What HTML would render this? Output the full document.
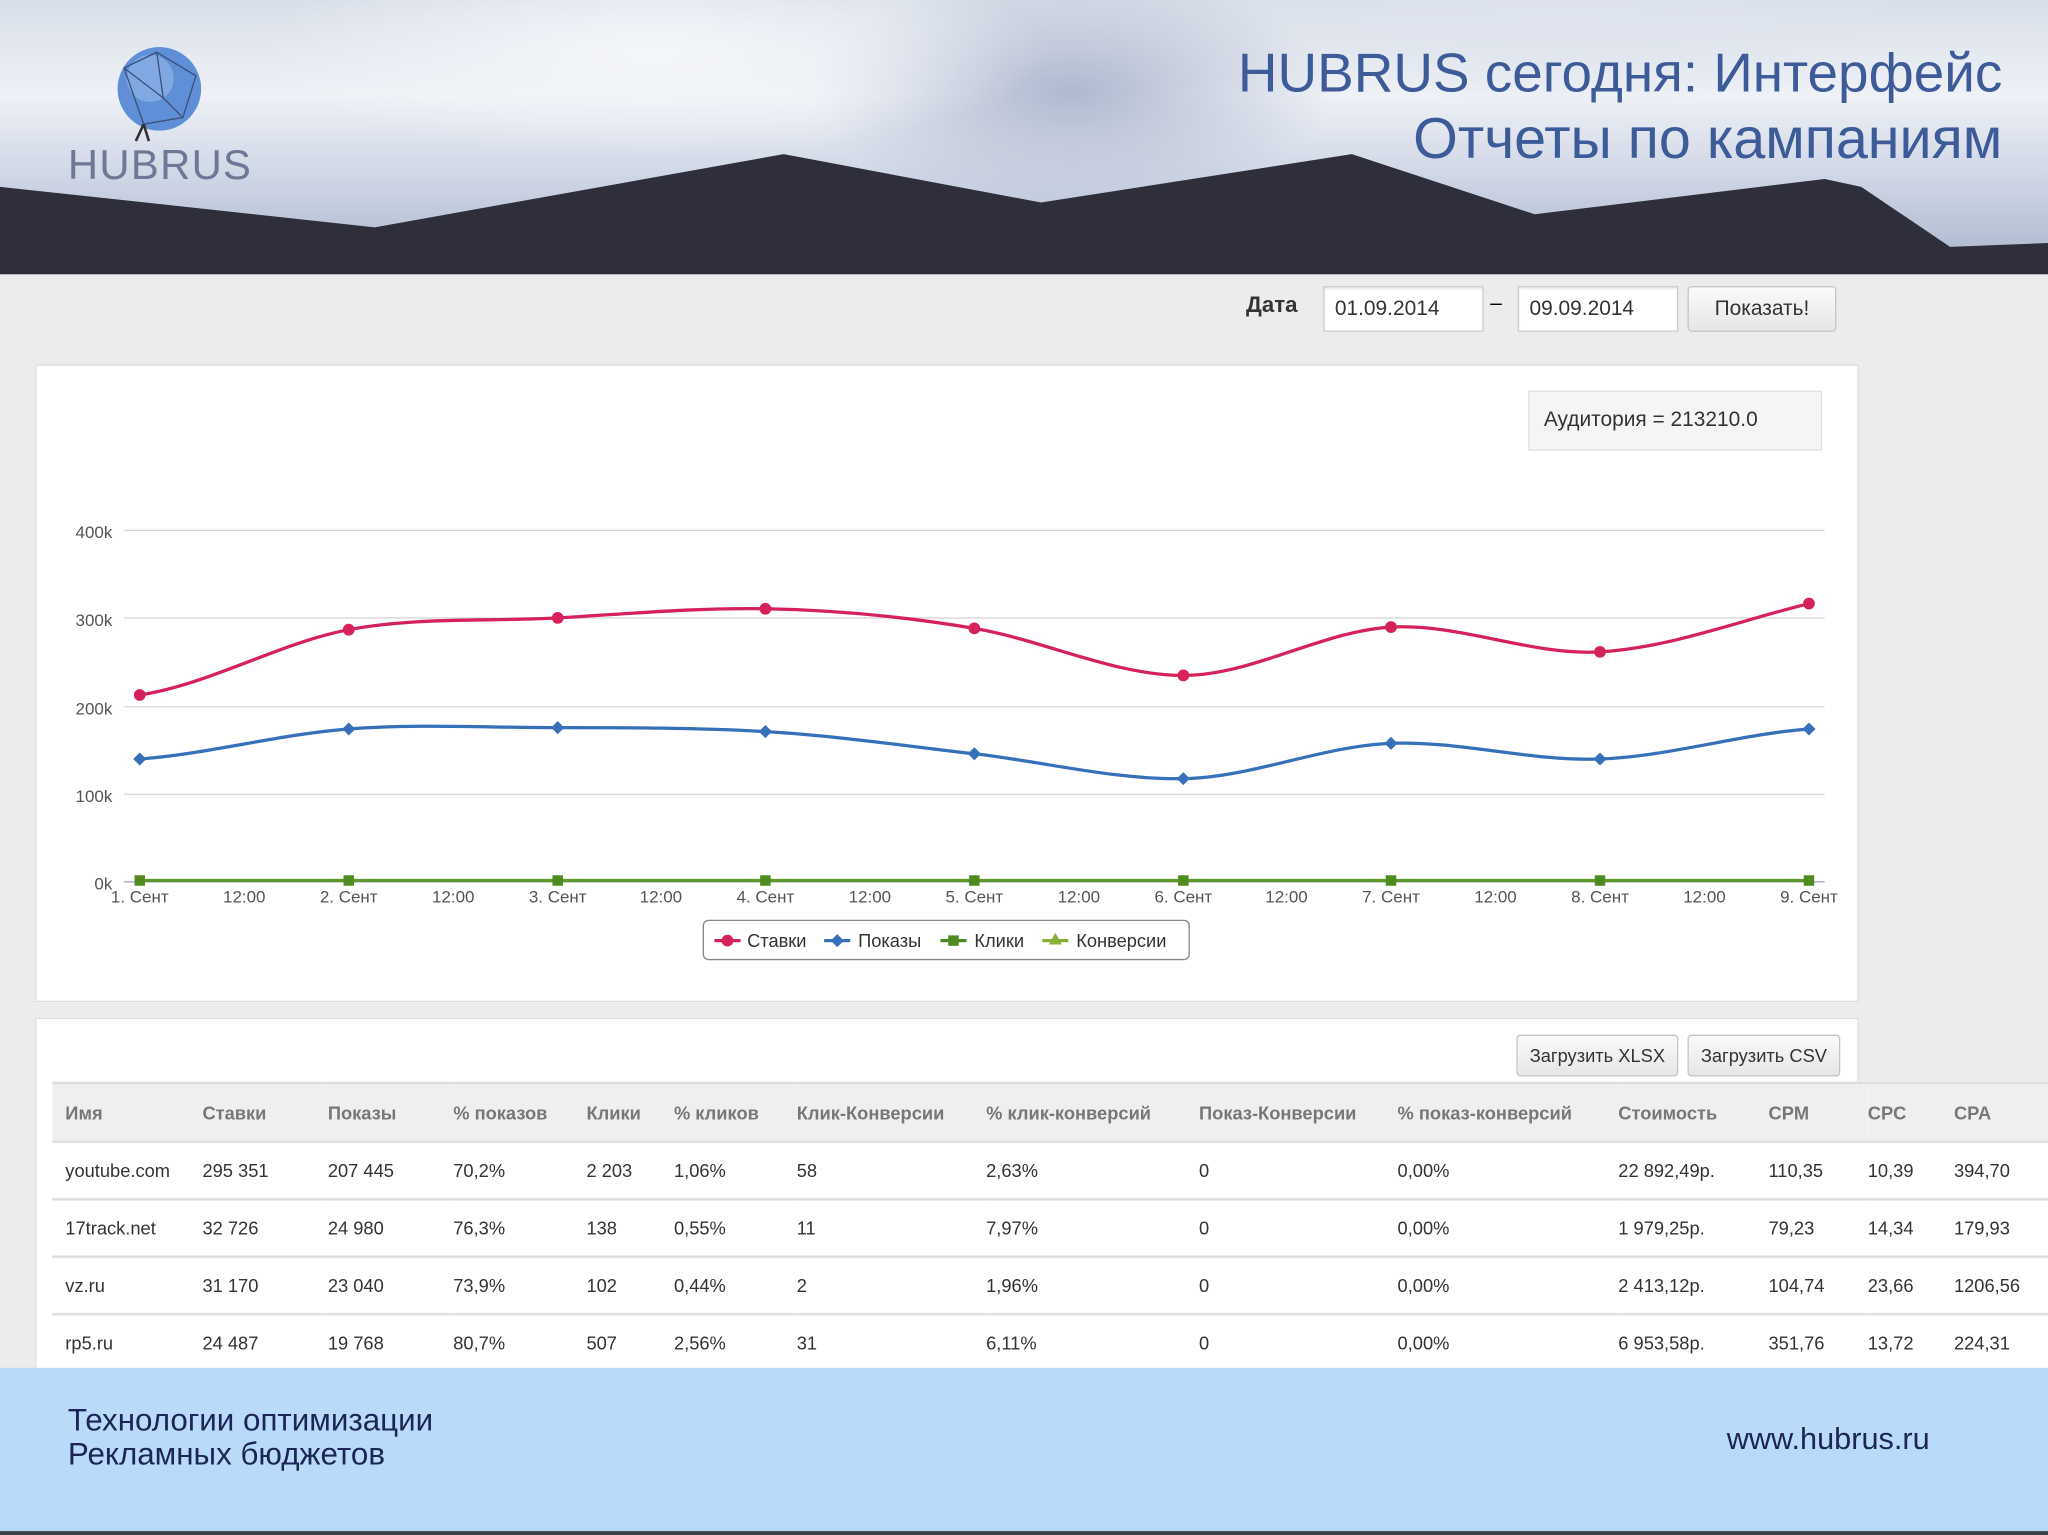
<!DOCTYPE html>
<html><head><meta charset="utf-8"><style>
html,body{margin:0;padding:0;width:2048px;height:1535px;overflow:hidden;background:#ececec}
#w{position:absolute;left:0;top:0;width:1568px;height:1175px;transform:scale(1.30612,1.3064);transform-origin:0 0;font-family:"Liberation Sans",sans-serif;background:#ececec;overflow:hidden}
.abs{position:absolute}
.hdr{left:0;top:0;width:1568px;height:209px;background:radial-gradient(ellipse 300px 80px at 500px 40px,#f4f6fa,transparent),radial-gradient(ellipse 200px 90px at 820px 70px,#aeb8cf,transparent),radial-gradient(ellipse 260px 60px at 1200px 20px,#dfe4ee,transparent),linear-gradient(180deg,#d9dfe9 0%,#eef1f6 35%,#c9d1e2 70%,#aab5cc 100%)}
.title{right:35px;color:#3c5b98;text-align:right;white-space:nowrap}
.inp{background:#fff;border:1px solid #ccc;box-shadow:inset 0 1px 2px rgba(0,0,0,.1);font-size:16px;color:#333;line-height:34px;padding-left:8px;box-sizing:border-box;height:35px}
.btn{background:linear-gradient(#fafafa,#e6e6e6);border:1px solid #c4c4c4;border-radius:3px;font-size:15px;color:#333;text-align:center;box-sizing:border-box}
.panel{background:#fff;border:1px solid #ddd}
table{border-collapse:collapse;font-size:14px;color:#333;table-layout:fixed}
td{padding:0;height:42px;border-bottom:2px solid #e0e0e0;white-space:nowrap;overflow:hidden}
tr.h td{background:#efefef;color:#777;font-weight:bold;height:43px}
</style></head><body><div id="w">
<div class="abs hdr"></div>
<svg class="abs" style="left:0;top:0" width="1568" height="210"><polygon points="0,143 287,174 600,118 797,155 1035,118 1175,164 1397,137 1425,143 1493,189 1568,186 1568,210 0,210" fill="#2e2f3a"/>
<circle cx="122" cy="68" r="32" fill="#5f8fd6"/><circle cx="115" cy="60" r="18" fill="#8fb4ea" opacity=".7"/>
<path d="M95,52 L120,40 L150,58 L140,90 L110,95 Z M120,40 L125,75 L140,90 M125,75 L95,52" stroke="#3a4f7a" stroke-width="1" fill="none"/>
<path d="M110,95 L104,108 M110,95 L114,108" stroke="#333" stroke-width="2"/></svg>
<div class="abs" style="left:52px;top:108px;font-size:32px;color:#6b7896;letter-spacing:1px">HUBRUS</div>
<div class="abs title" style="top:32px;font-size:42px">HUBRUS сегодня: Интерфейс</div>
<div class="abs title" style="top:82px;font-size:44px">Отчеты по кампаниям</div>

<div class="abs" style="left:954px;top:224px;font-size:17px;font-weight:bold;color:#333">Дата</div>
<div class="abs inp" style="left:1013px;top:219px;width:123px">01.09.2014</div>
<div class="abs" style="left:1141px;top:224px;font-size:16px">–</div>
<div class="abs inp" style="left:1162px;top:219px;width:123px">09.09.2014</div>
<div class="abs btn" style="left:1292px;top:219px;width:114px;height:35px;line-height:33px;font-size:16px">Показать!</div>

<div class="abs panel" style="left:27px;top:279px;width:1394px;height:486px"></div>
<div class="abs" style="left:1170px;top:299px;width:225px;height:46px;background:#f5f5f5;border:1px solid #e0e0e0;box-sizing:border-box;font-size:16px;color:#333;line-height:44px;padding-left:11px">Аудитория = 213210.0</div>
<svg class="abs" style="left:0;top:0" width="1568" height="780" font-family="Liberation Sans,sans-serif" font-size="13" fill="#555">
<g stroke="#d8d8d8" stroke-width="1"><line x1="95" y1="406" x2="1397" y2="406"/><line x1="95" y1="473" x2="1397" y2="473"/><line x1="95" y1="541" x2="1397" y2="541"/><line x1="95" y1="608" x2="1397" y2="608"/><line x1="95" y1="675" x2="1397" y2="675" stroke="#aac"/></g>
<g text-anchor="end"><text x="86" y="412">400k</text><text x="86" y="479">300k</text><text x="86" y="547">200k</text><text x="86" y="614">100k</text><text x="86" y="681">0k</text></g>
<g text-anchor="middle"><text x="107" y="691">1. Сент</text><text x="187" y="691">12:00</text><text x="267" y="691">2. Сент</text><text x="347" y="691">12:00</text><text x="427" y="691">3. Сент</text><text x="506" y="691">12:00</text><text x="586" y="691">4. Сент</text><text x="666" y="691">12:00</text><text x="746" y="691">5. Сент</text><text x="826" y="691">12:00</text><text x="906" y="691">6. Сент</text><text x="985" y="691">12:00</text><text x="1065" y="691">7. Сент</text><text x="1145" y="691">12:00</text><text x="1225" y="691">8. Сент</text><text x="1305" y="691">12:00</text><text x="1385" y="691">9. Сент</text></g>
<line x1="107" y1="674" x2="1385" y2="674" stroke="#5a9a2a" stroke-width="2.5"/>
<g fill="#4f8a1e"><rect x="103" y="670" width="8" height="8"/><rect x="263" y="670" width="8" height="8"/><rect x="423" y="670" width="8" height="8"/><rect x="582" y="670" width="8" height="8"/><rect x="742" y="670" width="8" height="8"/><rect x="902" y="670" width="8" height="8"/><rect x="1061" y="670" width="8" height="8"/><rect x="1221" y="670" width="8" height="8"/><rect x="1381" y="670" width="8" height="8"/></g>
<path d="M107,532 C160,524 214,492 267,482 C320,472 374,476 427,473 C480,470 533,465 586,466 C639,467 693,472 746,481 C799,490 853,517 906,517 C959,517 1012,483 1065,480 C1118,477 1172,502 1225,499 C1278,496 1332,475 1385,462" fill="none" stroke="#d6225a" stroke-width="2.5"/>
<g fill="#d6225a"><circle cx="107" cy="532" r="4.5"/><circle cx="267" cy="482" r="4.5"/><circle cx="427" cy="473" r="4.5"/><circle cx="586" cy="466" r="4.5"/><circle cx="746" cy="481" r="4.5"/><circle cx="906" cy="517" r="4.5"/><circle cx="1065" cy="480" r="4.5"/><circle cx="1225" cy="499" r="4.5"/><circle cx="1385" cy="462" r="4.5"/></g>
<path d="M107,581 C160,577 214,562 267,558 C320,554 374,557 427,557 C480,557 533,557 586,560 C639,563 693,571 746,577 C799,583 853,597 906,596 C959,595 1012,571 1065,569 C1118,567 1172,583 1225,581 C1278,579 1332,562 1385,558" fill="none" stroke="#3570b8" stroke-width="2.5"/>
<g fill="#3570b8"><path d="M107,576l5,5-5,5-5-5z"/><path d="M267,553l5,5-5,5-5-5z"/><path d="M427,552l5,5-5,5-5-5z"/><path d="M586,555l5,5-5,5-5-5z"/><path d="M746,572l5,5-5,5-5-5z"/><path d="M906,591l5,5-5,5-5-5z"/><path d="M1065,564l5,5-5,5-5-5z"/><path d="M1225,576l5,5-5,5-5-5z"/><path d="M1385,553l5,5-5,5-5-5z"/></g>
<rect x="538.5" y="704.5" width="372" height="30" rx="4" fill="#fff" stroke="#888"/>
<g font-size="14" fill="#333"><line x1="547" y1="720" x2="567" y2="720" stroke="#d6225a" stroke-width="2.5"/><circle cx="557" cy="720" r="4.5" fill="#d6225a"/><text x="572" y="725">Ставки</text>
<line x1="631" y1="720" x2="651" y2="720" stroke="#3570b8" stroke-width="2.5"/><path d="M641,715l5,5-5,5-5-5z" fill="#3570b8"/><text x="657" y="725">Показы</text>
<line x1="720" y1="720" x2="740" y2="720" stroke="#4f8a1e" stroke-width="2.5"/><rect x="726" y="716" width="8" height="8" fill="#4f8a1e"/><text x="746" y="725">Клики</text>
<line x1="798" y1="720" x2="818" y2="720" stroke="#8aae3a" stroke-width="2.5"/><path d="M808,714l5,9h-10z" fill="#8aae3a"/><text x="824" y="725">Конверсии</text></g>
</svg>

<div class="abs panel" style="left:27px;top:779px;width:1394px;height:300px"></div>
<div class="abs btn" style="left:1161px;top:792px;width:124px;height:32px;line-height:31px;font-size:14px">Загрузить XLSX</div>
<div class="abs btn" style="left:1292px;top:792px;width:117px;height:32px;line-height:31px;font-size:14px">Загрузить CSV</div>
<table class="abs" style="left:40px;top:828px;width:1528px;background:#fff;border-top:2px solid #ddd">
<colgroup><col style="width:115px"><col style="width:96px"><col style="width:96px"><col style="width:102px"><col style="width:67px"><col style="width:94px"><col style="width:145px"><col style="width:163px"><col style="width:152px"><col style="width:169px"><col style="width:115px"><col style="width:76px"><col style="width:66px"><col style="width:72px"></colgroup>
<tr class="h"><td style="padding-left:10px">Имя</td><td>Ставки</td><td>Показы</td><td>% показов</td><td>Клики</td><td>% кликов</td><td>Клик-Конверсии</td><td>% клик-конверсий</td><td>Показ-Конверсии</td><td>% показ-конверсий</td><td>Стоимость</td><td>CPM</td><td>CPC</td><td>CPA</td></tr>
<tr><td style="padding-left:10px">youtube.com</td><td>295 351</td><td>207 445</td><td>70,2%</td><td>2 203</td><td>1,06%</td><td>58</td><td>2,63%</td><td>0</td><td>0,00%</td><td>22 892,49р.</td><td>110,35</td><td>10,39</td><td>394,70</td></tr>
<tr><td style="padding-left:10px">17track.net</td><td>32 726</td><td>24 980</td><td>76,3%</td><td>138</td><td>0,55%</td><td>11</td><td>7,97%</td><td>0</td><td>0,00%</td><td>1 979,25р.</td><td>79,23</td><td>14,34</td><td>179,93</td></tr>
<tr><td style="padding-left:10px">vz.ru</td><td>31 170</td><td>23 040</td><td>73,9%</td><td>102</td><td>0,44%</td><td>2</td><td>1,96%</td><td>0</td><td>0,00%</td><td>2 413,12р.</td><td>104,74</td><td>23,66</td><td>1206,56</td></tr>
<tr><td style="padding-left:10px">rp5.ru</td><td>24 487</td><td>19 768</td><td>80,7%</td><td>507</td><td>2,56%</td><td>31</td><td>6,11%</td><td>0</td><td>0,00%</td><td>6 953,58р.</td><td>351,76</td><td>13,72</td><td>224,31</td></tr>
</table>

<div class="abs" style="left:0;top:1047px;width:1568px;height:125px;background:#b9dbf9"></div>
<div class="abs" style="left:52px;top:1075px;font-size:24px;color:#1c2458;line-height:26px">Технологии оптимизации<br>Рекламных бюджетов</div>
<div class="abs" style="left:1322px;top:1088px;font-size:23.5px;color:#1c2458">www.hubrus.ru</div>
<div class="abs" style="left:0;top:1172px;width:1568px;height:3px;background:#3a4048"></div>
</div></body></html>
